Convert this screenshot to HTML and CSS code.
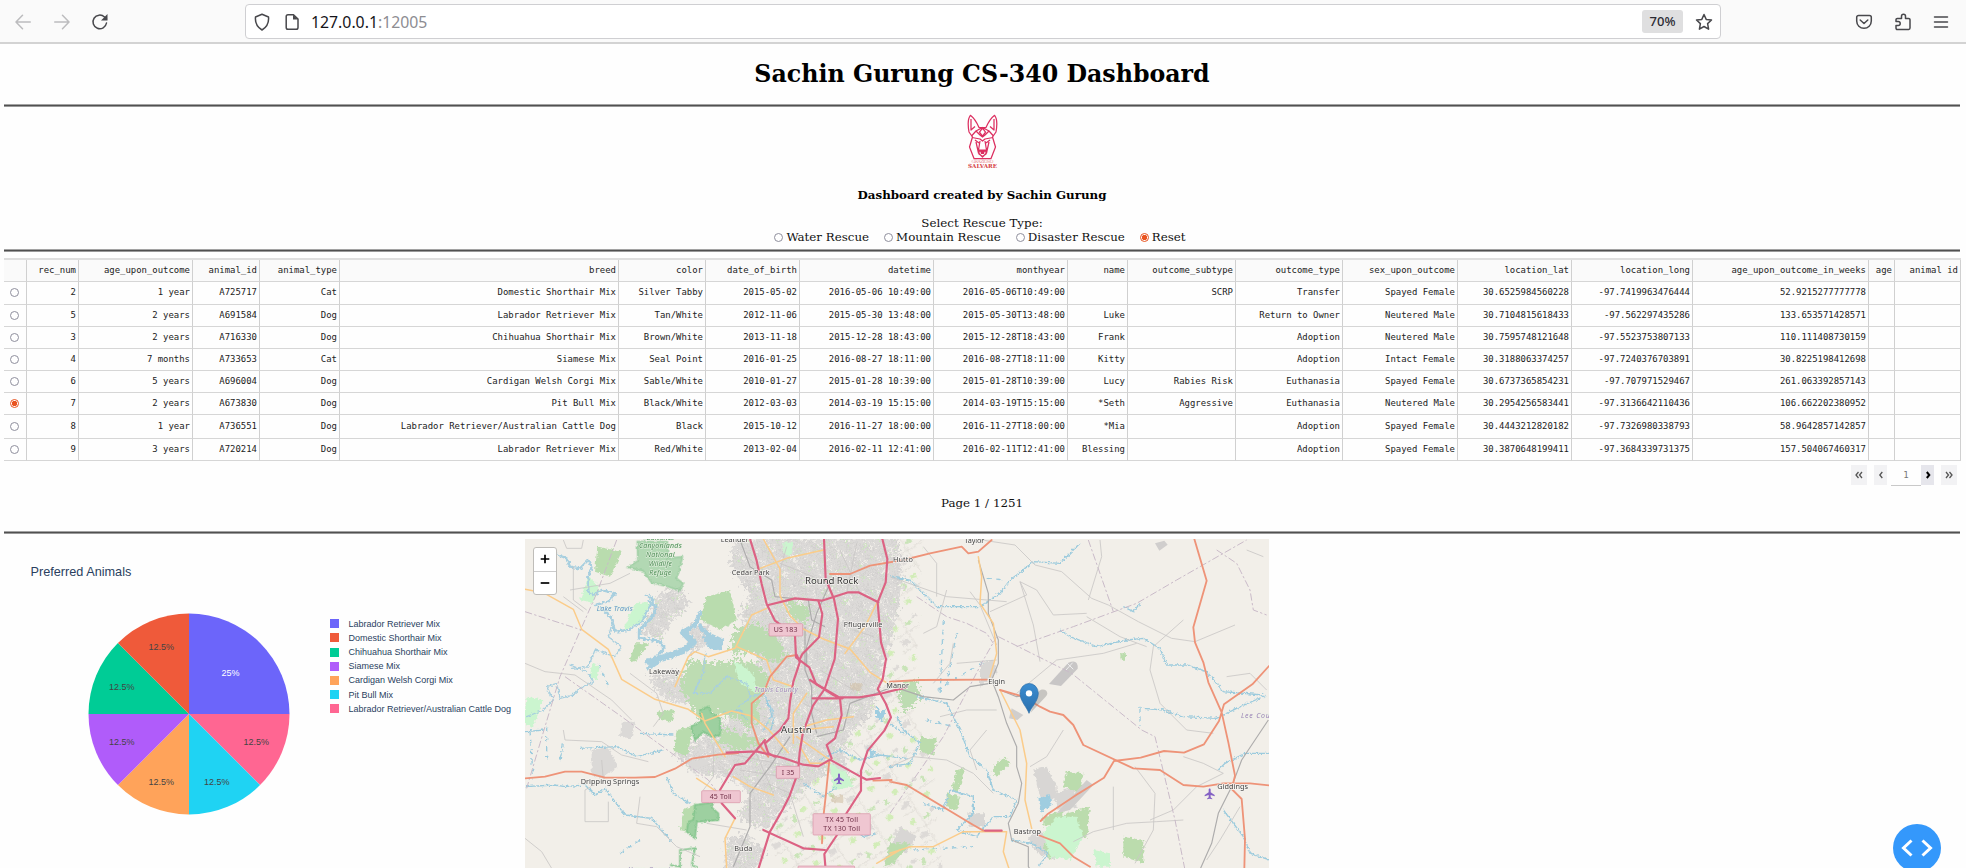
FILE: index.html
```html
<!DOCTYPE html>
<html lang="en">
<head>
<meta charset="utf-8">
<title>Sachin Gurung CS-340 Dashboard</title>
<link rel="stylesheet" href="styles.css">
</head>
<body>
<header class="toolbar">
  <div class="nav">
    <svg class="faded" width="16" height="16" viewBox="0 0 16 16"><path d="M15.3 8H1.2M7.5 1.3 1 8l6.500 6.700"/></svg>
    <svg class="faded" width="16" height="16" viewBox="0 0 16 16"><path d="M.7 8h14.100M8.500 1.300 15 8l-6.500 6.700"/></svg>
    <svg class="reload" width="18" height="18" viewBox="0 0 18 18"><path d="M15.500 10a6.800 6.800 0 1 1-2-6l2 2"/><path class="solid" d="M16.500 1v6.500H10z"/></svg>
  </div>
  <div class="urlbar">
    <svg class="shield" width="18" height="18" viewBox="0 0 18 18"><path d="M9 1.200 15.500 4c.6 6-1.500 10-6.500 13C4 14 1.900 10 2.500 4z"/></svg>
    <svg class="doc" width="16" height="18" viewBox="0 0 16 18"><path d="M4 1.700h5.500L14 6v8.500a1.800 1.800 0 0 1-1.800 1.800H4a1.800 1.800 0 0 1-1.800-1.800v-11A1.800 1.800 0 0 1 4 1.700z"/><path class="solid" d="M9 1.500V6.500h5z"/></svg>
    <div class="url">127.0.0.1<span>:12005</span></div>
    <div class="zoom">70%</div>
    <svg class="star" width="18" height="18" viewBox="0 0 18 18"><path d="m9 1.500 2.200 4.900 5.300.6-3.900 3.600 1 5.600L9 13.500l-4.600 2.700 1-5.600L1.500 7l5.300-.6z"/></svg>
  </div>
  <div class="tools">
    <svg width="18" height="18" viewBox="0 0 18 18"><path d="M3.500 2.500h11a1.800 1.800 0 0 1 1.800 1.800V8A7.200 7.200 0 0 1 1.700 8V4.300a1.800 1.800 0 0 1 1.800-1.800zM5.200 7 9 10.500 12.800 7"/></svg>
    <svg width="18" height="18" viewBox="0 0 18 18"><path d="M2.500 16.400h12.200a1.300 1.300 0 0 0 1.300-1.300V6.700a1.300 1.300 0 0 0-1.300-1.300h-3.200V3.200a2 2 0 0 0-4 0v2.200H3.300A1.300 1.300 0 0 0 2 6.700v1.800h2.200a2 2 0 0 1 0 4H2v2.700z"/></svg>
    <svg width="18" height="18" viewBox="0 0 18 18"><path d="M2.500 4h13M2.500 9h13M2.500 14h13"/></svg>
  </div>
</header>

<main class="page">
  <h1>Sachin Gurung CS-340 Dashboard</h1>
  <div class="rule"></div>
  <section class="intro">
    <svg class="logo" width="31" height="55" viewBox="0 0 31 55">
      <g fill="none" stroke="#dc2f60" stroke-width="1.250" stroke-linejoin="round">
        <path d="M2 18C.6 10 1.200 4 3.400 1.300 7 4 10 9 12 13.500h7C21 9 24 4 27.600 1.300 29.800 4 30.400 10 29 18l-3.500 5L28.500 33 24 44.500H7L2.500 33 5.500 23z"/>
        <path d="M4 5v11l4-3.500M27 5v11l-4-3.500M9 17l6.500-3.500L22 17M4.500 22 9 17l4 4 2.500 2 2.500-2 4-4 4.500 5M15.500 14l-3 4 3 4 3-4z"/>
        <path d="M5 23.500l8 1.500 2.500 2 2.500-2 8-1.500M8 26l4 3M23 26l-4 3M9 28l2.500 11 4 4 4-4L22 28M13 27l-1.500 9h8L18 27M12 37h7v3l-3.500 2.500L12 40z"/>
      </g>
      <path d="M13 36h5l-1 4h-3z" fill="#dc2f60"/>
      <text x="4.500" y="49" textLength="22" class="logo-small">GRAZIOSO</text>
      <text x="1" y="54.300" textLength="29" class="logo-big">SALVARE</text>
    </svg>
    <h5>Dashboard created by Sachin Gurung</h5>
    <div class="prompt">Select Rescue Type:</div>
    <div class="options">
      <label><i class="radio"></i>Water Rescue</label>
      <label><i class="radio"></i>Mountain Rescue</label>
      <label><i class="radio"></i>Disaster Rescue</label>
      <label><i class="radio on"></i>Reset</label>
    </div>
  </section>
  <div class="rule"></div>

  <table class="grid">
    <colgroup><col class="c0"><col class="c1"><col class="c2"><col class="c3"><col class="c4"><col class="c5"><col class="c6"><col class="c7"><col class="c8"><col class="c9"><col class="c10"><col class="c11"><col class="c12"><col class="c13"><col class="c14"><col class="c15"><col class="c16"><col class="c17"><col class="c18"></colgroup>
    <thead><tr><th></th><th>rec_num</th><th>age_upon_outcome</th><th>animal_id</th><th>animal_type</th><th>breed</th><th>color</th><th>date_of_birth</th><th>datetime</th><th>monthyear</th><th>name</th><th>outcome_subtype</th><th>outcome_type</th><th>sex_upon_outcome</th><th>location_lat</th><th>location_long</th><th>age_upon_outcome_in_weeks</th><th>age</th><th>animal id</th></tr></thead>
    <tbody>
      <tr><td><i class="radio"></i></td><td>2</td><td>1 year</td><td>A725717</td><td>Cat</td><td>Domestic Shorthair Mix</td><td>Silver Tabby</td><td>2015-05-02</td><td>2016-05-06 10:49:00</td><td>2016-05-06T10:49:00</td><td></td><td>SCRP</td><td>Transfer</td><td>Spayed Female</td><td>30.6525984560228</td><td>-97.7419963476444</td><td>52.9215277777778</td><td></td><td></td></tr>
      <tr><td><i class="radio"></i></td><td>5</td><td>2 years</td><td>A691584</td><td>Dog</td><td>Labrador Retriever Mix</td><td>Tan/White</td><td>2012-11-06</td><td>2015-05-30 13:48:00</td><td>2015-05-30T13:48:00</td><td>Luke</td><td></td><td>Return to Owner</td><td>Neutered Male</td><td>30.7104815618433</td><td>-97.562297435286</td><td>133.653571428571</td><td></td><td></td></tr>
      <tr><td><i class="radio"></i></td><td>3</td><td>2 years</td><td>A716330</td><td>Dog</td><td>Chihuahua Shorthair Mix</td><td>Brown/White</td><td>2013-11-18</td><td>2015-12-28 18:43:00</td><td>2015-12-28T18:43:00</td><td>Frank</td><td></td><td>Adoption</td><td>Neutered Male</td><td>30.7595748121648</td><td>-97.5523753807133</td><td>110.111408730159</td><td></td><td></td></tr>
      <tr class="short"><td><i class="radio"></i></td><td>4</td><td>7 months</td><td>A733653</td><td>Cat</td><td>Siamese Mix</td><td>Seal Point</td><td>2016-01-25</td><td>2016-08-27 18:11:00</td><td>2016-08-27T18:11:00</td><td>Kitty</td><td></td><td>Adoption</td><td>Intact Female</td><td>30.3188063374257</td><td>-97.7240376703891</td><td>30.8225198412698</td><td></td><td></td></tr>
      <tr><td><i class="radio"></i></td><td>6</td><td>5 years</td><td>A696004</td><td>Dog</td><td>Cardigan Welsh Corgi Mix</td><td>Sable/White</td><td>2010-01-27</td><td>2015-01-28 10:39:00</td><td>2015-01-28T10:39:00</td><td>Lucy</td><td>Rabies Risk</td><td>Euthanasia</td><td>Spayed Female</td><td>30.6737365854231</td><td>-97.707971529467</td><td>261.063392857143</td><td></td><td></td></tr>
      <tr><td><i class="radio on"></i></td><td>7</td><td>2 years</td><td>A673830</td><td>Dog</td><td>Pit Bull Mix</td><td>Black/White</td><td>2012-03-03</td><td>2014-03-19 15:15:00</td><td>2014-03-19T15:15:00</td><td>*Seth</td><td>Aggressive</td><td>Euthanasia</td><td>Neutered Male</td><td>30.2954256583441</td><td>-97.3136642110436</td><td>106.662202380952</td><td></td><td></td></tr>
      <tr class="tall"><td><i class="radio"></i></td><td>8</td><td>1 year</td><td>A736551</td><td>Dog</td><td>Labrador Retriever/Australian Cattle Dog</td><td>Black</td><td>2015-10-12</td><td>2016-11-27 18:00:00</td><td>2016-11-27T18:00:00</td><td>*Mia</td><td></td><td>Adoption</td><td>Spayed Female</td><td>30.4443212820182</td><td>-97.7326980338793</td><td>58.9642857142857</td><td></td><td></td></tr>
      <tr class="short"><td><i class="radio"></i></td><td>9</td><td>3 years</td><td>A720214</td><td>Dog</td><td>Labrador Retriever Mix</td><td>Red/White</td><td>2013-02-04</td><td>2016-02-11 12:41:00</td><td>2016-02-11T12:41:00</td><td>Blessing</td><td></td><td>Adoption</td><td>Spayed Female</td><td>30.3870648199411</td><td>-97.3684339731375</td><td>157.504067460317</td><td></td><td></td></tr>
    </tbody>
  </table>
  <div class="pager">
    <span class="btn first"><svg width="8" height="8" viewBox="0 0 8 8"><path d="M3.500 1 1 4l2.500 3M7 1 4.500 4 7 7"/></svg></span>
    <span class="btn prev"><svg width="8" height="8" viewBox="0 0 8 8"><path d="M5.300 1 2.800 4l2.500 3"/></svg></span>
    <span class="current">1</span>
    <span class="btn next"><svg width="8" height="8" viewBox="0 0 8 8"><path d="M2.800 1 5.300 4 2.800 7"/></svg></span>
    <span class="btn last"><svg width="8" height="8" viewBox="0 0 8 8"><path d="M1 1l2.500 3L1 7M4.500 1 7 4 4.500 7"/></svg></span>
  </div>
  <div class="page-count">Page 1 / 1251</div>
  <div class="rule"></div>

  <section class="charts">
    <div class="pie-card">
      <h2>Preferred Animals</h2>
      <div class="pie-row">
        <svg class="pie" width="202" height="202" viewBox="-101 -101 202 202">
          <path fill="#6c65fa" d="M0 0V-100.500A100.500 100.500 0 0 1 100.500 0z"/>
          <path fill="#ff6692" d="M0 0H100.500A100.500 100.500 0 0 1 71.060 71.060z"/>
          <path fill="#1fd3f3" d="M0 0 71.060 71.060A100.500 100.500 0 0 1 0 100.500z"/>
          <path fill="#ffa35a" d="M0 0V100.500A100.500 100.500 0 0 1-71.060 71.060z"/>
          <path fill="#b05cfa" d="M0 0-71.060 71.060A100.500 100.500 0 0 1-100.500 0z"/>
          <path fill="#00cc96" d="M0 0H-100.500A100.500 100.500 0 0 1-71.060-71.060z"/>
          <path fill="#ef5a3a" d="M0 0-71.060-71.060A100.500 100.500 0 0 1 0-100.500z"/>
          <g class="slice">
            <text class="light" x="41.500" y="-38">25%</text>
            <text x="-27.700" y="-64">12.5%</text><text x="-67.300" y="-24.300">12.5%</text>
            <text x="-67.300" y="31.200">12.5%</text><text x="-27.700" y="71">12.5%</text>
            <text x="27.700" y="71">12.5%</text><text x="67.300" y="31.200">12.5%</text>
          </g>
        </svg>
        <ul class="legend">
          <li><i class="k1"></i>Labrador Retriever Mix</li>
          <li><i class="k2"></i>Domestic Shorthair Mix</li>
          <li><i class="k3"></i>Chihuahua Shorthair Mix</li>
          <li><i class="k4"></i>Siamese Mix</li>
          <li><i class="k5"></i>Cardigan Welsh Corgi Mix</li>
          <li><i class="k6"></i>Pit Bull Mix</li>
          <li><i class="k7"></i>Labrador Retriever/Australian Cattle Dog</li>
        </ul>
      </div>
    </div>
    <div class="map">
      <svg width="744" height="329" viewBox="15 27 2232 987">
        <defs>
          <filter id="wiggle" x="-5%" y="-5%" width="110%" height="110%"><feTurbulence type="fractalNoise" baseFrequency=".12" numOctaves="2" seed="4"/><feDisplacementMap in="SourceGraphic" scale="9" xChannelSelector="R" yChannelSelector="G"/></filter>
          <filter id="stream" x="-5%" y="-5%" width="110%" height="110%"><feTurbulence type="fractalNoise" baseFrequency=".13" numOctaves="2" seed="7"/><feDisplacementMap in="SourceGraphic" scale="13" xChannelSelector="R" yChannelSelector="G"/></filter>
          <filter id="rough" x="-5%" y="-5%" width="110%" height="110%"><feTurbulence type="fractalNoise" baseFrequency=".1" numOctaves="3" seed="9"/><feDisplacementMap in="SourceGraphic" scale="16" xChannelSelector="R" yChannelSelector="G"/></filter>
          <filter id="patchy" x="-5%" y="-5%" width="110%" height="110%"><feTurbulence type="fractalNoise" baseFrequency=".1" numOctaves="3" seed="9"/><feDisplacementMap in="SourceGraphic" scale="55" xChannelSelector="R" yChannelSelector="G"/></filter>
          <pattern id="streets" width="68" height="60" patternUnits="userSpaceOnUse" patternTransform="rotate(22)"><rect width="68" height="60" fill="#dcdad8"/><path d="M0 8h34M10 0v30M0 22h50M24 8v42M34 40h34M48 20v40M60 0v25M0 46h14" stroke="#cbc9c8" stroke-width="2" fill="none"/><path d="M28 12h8v8h-8zM52 44h8v6h-8z" fill="#cbe9bb"/><path d="M2 26h8v10H2zM36 0h14v12H36zM14 50h10v8H14z" fill="#efece7"/></pattern>
          <pattern id="fields" width="130" height="104" patternUnits="userSpaceOnUse" patternTransform="rotate(-32)"><path d="M8 8h18v14H8zM84 64h20v14H84z" fill="#d2edb8"/><path d="M50 16h22v10H50zM104 18h12v18h-12z" fill="#c9e4b8"/><path d="M10 58h26v18H10zM78 8h16v10H78z" fill="#dddad7"/><path d="M0 44h130M44 0v104M0 90h44" stroke="#d6d2ce" stroke-width="2"/></pattern>
          <linearGradient id="pin" x2="0" y2="1"><stop offset="0" stop-color="#3b8cd0"/><stop offset="1" stop-color="#2a70ad"/></linearGradient>
        </defs>
        <rect x="0" y="0" width="2300" height="1100" fill="#f2efe9"/>

        <!-- built-up land -->
        <g filter="url(#rough)">
          <path fill="url(#fields)" d="M1010 20h200l-10 250-20 250 60 200 30 320H730l40-240 190-130z"/>
        </g>
        <g filter="url(#patchy)">
          <path fill="url(#streets)" d="M640 20h490l20 130-30 150-40 150-30 110-60 50-20 60 20 70-60-20-80 60-60 60-50 60-90-40 40-60-40-50-130-20-60-60 80-40 60-50 90-60 30-110-60-150 30-70-60-80z"/>
          <path fill="url(#streets)" d="M620 930l60-20 60 60-40 50h-80zM560 590l140 0 20 80-130 10zM380 440l90-20 40 60 60 20-20 30-120-20zM420 190l60-20 30 50-60 60-30 50-60-20zM500 290l60-10 10 60-60 30z"/>
        </g>
        <g filter="url(#rough)">
          <path fill="#dbd9d7" d="M215 660l50-10 30 60-50 35-30-10zM305 575l40 0-10 50-35-5zM500 700l60-15 10 20-60 10z"/>
          <path fill="#d8d6d4" d="M1540 720l40-10 30 60 0 40-50-10zM1610 790l50-20 10 60-60 10zM1545 900l60 30 0 60-50-20-30-40zM1345 850l50 0 0 40-50 0zM1140 890l50 30-30 50-50-10zM1380 400l40-10 10 40-50 40z"/>
        </g>
        <!-- parks and woods -->
        <g filter="url(#rough)">
          <path fill="#b9dcae" d="M232 50l73 15-35 75-45-15zM345 340l40 0-40 60-15-10zM410 545l50-5 0 35-40-5zM470 600l50-10-20 90-40-20zM490 840l40-20-10 90-40-10zM560 200l70-20 20 90-50 30-60-30z"/>
        </g>
        <g filter="url(#patchy)" fill="#bddcb2">
          <path d="M640 300l70-20 60 40 30 50-30 30-60-30-80 0zM480 470l30-80 60 10 80-10 60 10 40 50-30 60-60 60-60-20-70 10zM650 530l60-20 10 60-40 30zM610 590l120 50-70 25-70-30zM800 210l70 20-10 50-50-20zM1130 470l60-20 10 60-50 40zM710 300l50 10 10 60-50-20z"/>
        </g>
        <g filter="url(#rough)">
          <path fill="#bbdcad" d="M1640 725l50 5-10 60-50-20zM1450 680l20 20-40 40-15-20zM1310 720l25-5-20 75-20-10zM1200 620l50 5-10 50-40-10zM1640 850l70-20-10 90-80 10-30 60-20-40zM1810 920l60 10 0 70-60-20zM1110 940l60 0-50 60-30 10zM1280 790l40 10-10 40-30-10zM1570 860l60-20 0 30-60 20zM1800 370l18 0 0 22-15 0z"/>
          <path fill="#cbf5cf" d="M345 220l50-5-25 60-60 25zM205 140l35 30-20 50-40-10zM20 500l50 10-30 80-30-10zM1570 910l40-50 60 0 20 60-40 70-60-10zM640 390l60 40 10 60-50-30zM790 35l30 5-10 40-20-10zM930 700l50 30 20 40-60 10zM215 400l25 10-10 40-20-10zM1720 960l50 10 0 40-40 0z"/>
          <path fill="#cdb99b" opacity=".5" d="M990 460l35 0 0 25-30-5zM930 800l40-5 0 25-35-5z"/>
        </g>
        <g fill="#9dd0a0" stroke="#83c58c" stroke-width="5" filter="url(#wiggle)">
          <path d="M352 35l90 0 0 50 45-5-10 45-8 20 20 15-10 22-45-15-40-10-25-35-45-10 30-20z" opacity=".75"/>
          <path d="M540 540l25-10 10 20 25 15 0 50-25 5-25-15-25 25-12-40 30-15z"/><path d="M525 825l55-8-5 15 20 18 0 20-65 5-5 50-25-20 5-30 15-5z"/>
          <path fill="none" d="M450 1005l30 5 0-50 45-5-10 50 20 8"/>
        </g>
        <path fill="#c8c6c6" d="M1645 398q30-12 28 18l-50 52-36-6z"/><path d="M1640 398l20 20M1658 398l-20 22" stroke="#eee" stroke-width="3"/>
        <path fill="#d0cecd" d="M1700 750l20 15-70 75-40 10zM1475 535l35 20-18 15-25-5zM1905 40l28-8 10 12-25 18z"/>

        <!-- water -->
        <g fill="none" stroke="#a8cfdf" stroke-linejoin="round" stroke-linecap="round" filter="url(#stream)">
          <path stroke-width="7" d="M115 75l25 10 10 25 30 5 25-25 10 20-10 30 0 45 15 10 25-15 40 10-20 25-40 10M245 235l30 30 10 40 40-5 40-25 35-65-20-15"/>
          <path stroke-width="9" d="M388 215l20 15-10 30-40 40 0 25 60 8 15 20-30 35"/>
          <path stroke-width="20" d="M385 395l55-15 50-18 30-25-30-30"/>
          <path stroke-width="13" d="M490 305l35-20 15-35M540 290l30 30M415 395l-30 20"/>
          <path fill="#a8cfdf" stroke-width="5" d="M565 310l25 10 20 10-10 28-30-5-20-30z"/>
          <path stroke-width="4" d="M555 370l-5 60-30 60 50 0 50-50 60 20 10 40 40-10 30 60-30 50M695 500l-40 30"/>
          <path stroke-width="4" d="M280 270l-15 50 40 30-20 30-60-20-20 50-50 5M150 405l50 20 20 30-40 20-20 20-40 10-10-45-30 10 20 40-30 30-50 20"/>
        </g>
        <g fill="none" stroke="#9ccbdd" stroke-width="4" filter="url(#stream)">
          <path d="M15 770l90-5 30 5 60-5 30 30 30-20 60 80 80 10 60 70M180 655l110-5 60 30 80-20M360 610l100 5M440 740l20 50 50 30M15 605l60-5M130 640l-10 50"/>
          <path d="M900 690l60-30 60 30 60-15 80 10M850 760l60 40 40-30M610 550l50-10 20 30M740 510l20 60-10 40M980 880l50 40 40-10"/>
          <path d="M1110 140l60 10 80 80 130 0 60-40 30-40 20-15 50-40 80 5 60-60"/>
          <path d="M1620 300l30 20 80 30 90-20 50-5 50 30 20 50 60 0 60 20 50 60 120 10"/>
          <path d="M1870 535l60 5 60 20 100 5 60-30 90-40"/><path d="M1190 500l90 20 40 80 30 80 50 40 20 60 70 30-20 50-50 0-50 60-60-20 50-50 0-50-70-20-20 60-60-20M1110 710l60-10 30-60-50-40-20-40M1110 580l40 30"/>
          <path d="M2095 720l20-20 60-30 80 0M2110 840l60 80 20 50 60 20M1475 930l60 10 50 30-30 40M1810 230l30 15 20-25"/>
          <path stroke-dasharray="16 13" d="M1270 270l-10 230M1310 310l-30 150M235 400l35 80M30 600l10 150M80 590l0 110M360 930l-60 40M1400 145l55 5M1180 960l180-10M1860 530l0 60M1250 480l150-90M1220 570l80 20"/>
        </g>
        <path filter="url(#rough)" fill="#9fcde0" d="M1068 520l10 25 20-10-10 40-20-15zM1555 805l35-10 5 30-30 20zM1040 650l25 15-10 15z"/>

        <!-- minor roads, rail and boundaries -->
        <g fill="none" stroke="#c9c6c5" stroke-width="2.500" stroke-linejoin="round">
          <path d="M15 400l60 25 90 10 110 75 60 60M130 600l5 30 110 5 60 40 80 20M245 690l5 60-55 30 0 95 70 0 0-60M360 800l-10 80 60 10 60 60 70 30M15 925l50 40 30 50M130 200l60 45M330 130l-60 30-120 20M330 430l80 60 20 60-30 40M580 650l0 90-30 40M130 30l10 25 45 0 5-25M160 110l0 100 40 30"/>
          <path d="M1210 50l40 50 0 100M1500 155l50 25 50 75 100-5M1350 185l30 40 50 120M1500 155l40 130 20 110M1110 140l170 60 180 15M1210 310l40-20 30-110M1490 490l120-100 140-20 100-30M1410 245l110-50-20-40"/>
          <path d="M1385 30l100 15 60 60 80 20 90 80 50 20 90 50 100 50 70 10 120-50M1990 270l-90 80-10 70 30 100 80 80 80 10M2180 60l50 20M1740 30l5 50-40 130M1845 710l60 80-5 110-55 100M1990 870l-80 5-90 5-100 25-60 30M1990 680l60 20 60 30-80 40-70 70-70 30M1700 260l100 60 80 30M2120 440l70-10 50 50M2160 830l-60 100-40 60"/>
          <path d="M1110 710l70-30 100 10 80 40 60 60M1260 560l80-20 90 0M1310 400l120-10M1530 710l50-30 50-80M1780 770l0 130M1300 340l-10 60-50 60M1400 600l-50 60 20 60"/>
          <path d="M620 670l200 40M660 720l190 30M700 650l60 140M560 880l120 20M740 760l70 30 40 130M1000 300l60 20M900 420l100 60M850 520l60 30M1000 660l60 60M780 100l100 40M680 80l60 50M800 50l-20 70M960 60l60 130M1010 40l-30 150"/>
        </g>
        <g fill="none" stroke="#adacac" stroke-width="3.500" stroke-linejoin="round">
          <path d="M930 160l-40 90-30 100 0 60M855 290l0 130 20 50 0 80 15 60M660 30l30 80 65 40 10 50 100 10 10 60 40 20M810 620l-60 90-60 80 0 100-50 120M890 620l80-20 20-80 130-50 90 30 90 10 50-40 60-10"/>
          <path d="M1375 90l30 100 0 60 30 80 0 70-20 50 20 50 25 80 30 70 0 60 15 50-10 60-30 60 10 50 50 20 0 60 40 60M2245 570l-80 120-30 80-40 80-20 90-40 90M1440 480l50 20 60-10"/>
        </g>
        <g fill="none" stroke="#c9bac8" stroke-width="3" stroke-dasharray="22 7 7 7">
          <path d="M290 30l-60 160-110 250-60 200-40 135M15 245l170 55M135 440l170 120 260 190 30 40M1435 320l220 110 210 170 40 20 60 250 30 150M1490 350l170-60 190-70 120-70 210-120M1705 30l75 215M1110 850l160-230 120-230 40-70M2090 60l60 40 40 80 10 60 40 15M1190 200l90 60 60 20 60 30 20 30"/>
        </g>

        <!-- highways -->
        <g fill="none" stroke-linejoin="round" stroke-linecap="round">
          <g stroke="#fbcc8a" stroke-width="4.500">
            <path d="M15 178l55 10 90 50 25 60 80 60 40 90 100 60 100 30 50 35 80-30 60 15 50 40 60 70M730 27l50 90 0 80 30 60 40 40 60 30 80 30 60 70 80 50M720 115l80-30 110-25M465 470l40-90 20-15 40 15 80-25 50-100 45-20M650 350l90 40 20 60 60 20M615 680l-60-100-10-30"/>
            <path d="M860 490l-40 60 0 90M940 590l-100 10M830 620l100 70M975 370l60-80 40-80M1000 560l-80 10-70 20-10 60 30 50 60 0M645 865l-30 60 5 90M530 745l60 40M640 740l50 30 70 25M1140 960l-70 40"/>
            <path d="M1375 80l10 60-5 80 40 60 10 90-20 70M1440 480l60 120 20 100-5 110 20 85M1110 970l60-20 70 0 90-45 130 0-10 60 20 60"/>
          </g>
          <g stroke="#ee9378" stroke-width="5.500">
            <path d="M15 745l60-5 60-15 50 0 70 18 90 0 60-2 60-25 50-30 80-12 60-5M930 132l60 0 60-25 100-17 80-20 95-20 20 20 30-5 40-35M1110 455l90-5 200-1M1440 480l70 20 50 30 30 15 40 10 30 30 30 60 150 70 80 5 70 45 60 5 60-10 80 0 190 20"/>
            <path d="M2023 27l37 125-40 140 5 45 25 60 15 60 40 90 20 90 20 100-10 40 30 30 10 120-2 90M2247 408l-50 55-85 60-15 50-45 70-60 25-60-5-70 20-80 10-30 50-80 50-90 60-20 20M1110 755l50 10 200 120 30 17M1555 915l65 25 40 40 50 30M1060 752l55-2M928 690l-10 100-10 90-2 60"/>
            <path d="M830 375l-30 5-50 60-20 50-35 30 0 60 20 60 30 40"/>
          </g>
          <g stroke="#dc6283" stroke-width="6.500">
            <path d="M912 27l5 120 25 60 12 60-5 60-5 60-30 90-35 50-30 80-10 60-5 60-25 70-20 40-40 70-40 130-25 80"/>
            <path d="M690 27l20 65 15 70 15 60 25 50 60 45 3 65 40 30 20 50 70 40 60 0 60-10 80-20M745 225l80-20 80 7 80-25 30 0 60 30M1087 27l15 60-5 70-24 60 5 60 5 60 15 50-10 60-15 30 25 45 15 40-20 40-50 60-20 60 0 60-45 70-25 60-40 60 5 60"/>
            <path d="M620 668l90-4 80 20 60 20 45 5 35-20 90 50 20 10 40-5M735 630l-60 70-30 5-45 75M605 820l40 45M730 900l120 55 65 5M1395 902h50M830 375l10 20-20 60-10 60-5 50-25 35-45 40 10 30 20 10M895 212l12 40-10 70-20 20-30 30-10 20M878 505l90 0M870 450l70 45 20 10 5 50-20 70-25 20 15 40"/>
          </g>
        </g>

        <!-- route shields -->
        <g class="shields">
          <rect x="747" y="281" width="101" height="37"/><rect x="769" y="709" width="70" height="36"/><rect x="545" y="782" width="116" height="36"/><rect x="879" y="851" width="172" height="64"/><rect x="834" y="1008" width="170" height="40"/>
          <text x="797" y="306" textLength="71">US 183</text><text x="804" y="734" textLength="38">I 35</text><text x="602" y="808" textLength="66">45 Toll</text><text x="965" y="877" textLength="98">TX 45 Toll</text><text x="965" y="903" textLength="110">TX 130 Toll</text>
        </g>
        <g class="places">
          <text class="city" x="935" y="162" textLength="160">Round Rock</text><text class="city" x="829" y="610" textLength="92">Austin</text>
          <text x="644" y="35" textLength="84">Leander</text><text x="692" y="135" textLength="114">Cedar Park</text><text x="1029" y="291" textLength="116">Pflugerville</text><text x="432" y="433" textLength="90">Lakeway</text><text x="270" y="762" textLength="176">Dripping Springs</text><text x="670" y="964" textLength="54">Buda</text><text x="1149" y="95" textLength="60">Hutto</text><text x="1363" y="38" textLength="60">Taylor</text><text x="1133" y="474" textLength="68">Manor</text><text x="1430" y="461" textLength="50">Elgin</text><text x="1522" y="912" textLength="82">Bastrop</text><text x="2138" y="776" textLength="92">Giddings</text>
        </g>
        <g class="nature">
          <text x="421" y="30">Balcones</text><text x="421" y="54" textLength="128">Canyonlands</text><text x="421" y="81" textLength="86">National</text><text x="421" y="108" textLength="70">Wildlife</text><text x="421" y="135" textLength="66">Refuge</text>
          <text class="lake" x="284" y="242" textLength="108">Lake Travis</text><text class="county" x="768" y="487" textLength="130">Travis County</text><text class="county" x="2224" y="564" textLength="122">Lee County</text><text class="county" x="393" y="1026" textLength="140">Hays County</text>
        </g>
        <g fill="#8461c4"><path id="plane" d="M954 734c0-5 6-5 6 0v8l12 8v4l-12-4v7l5 4v2l-8-2-8 2v-2l5-4v-7l-12 4v-4l12-8z"/><use href="#plane" x="1112" y="45"/></g>

        <!-- marker -->
        <path d="M1532 548l45-48c15-16-8-30-22-15z" fill="#777" opacity=".35"/>
        <path d="M1527 550c-6-18-27-37-27-60a27 29 0 0 1 55 0c0 23-22 42-28 60z" fill="url(#pin)" stroke="#2b6da7" stroke-width="2"/><circle cx="1527" cy="490" r="9.500" fill="#fff"/>
      </svg>
      <div class="map-zoom"><span><svg width="10" height="10" viewBox="0 0 10 10"><path d="M5 .7v8.600M.7 5h8.600"/></svg></span><span><svg width="10" height="10" viewBox="0 0 10 10"><path d="M.7 5h8.600"/></svg></span></div>
    </div>
  </section>
</main>
<div class="devtools"><svg width="32" height="18" viewBox="0 0 32 18"><path d="M10.500 1.500 2.500 9l8 7.500M21.500 1.500l8 7.500-8 7.500"/></svg></div>
</body>
</html>
```
FILE: styles.css
```css
* { box-sizing: border-box; }
body { margin: 0; width: 1966px; height: 868px; overflow: hidden; position: relative; background: #fefefe; color: #111; font: 12px/14px "DejaVu Serif", serif; }
svg { display: block; flex: none; }

/* browser toolbar */
.toolbar { height: 44px; display: flex; align-items: center; background: #fafafa; border-bottom: 2px solid #d3d3d3; padding: 1px 16px 0 15px; }
.toolbar svg { fill: none; stroke: #48484c; stroke-width: 1.5; stroke-linecap: round; stroke-linejoin: round; }
.toolbar .solid { fill: #48484c; stroke: none; }
.toolbar .faded { stroke: #bcbcbe; }
.nav { display: flex; align-items: center; gap: 23px; width: 230px; }
.nav .reload { margin-left: -2px; }
.urlbar { width: 1476px; height: 35px; display: flex; align-items: center; background: #fff; border: 1.500px solid #cfcfd2; border-radius: 4px; padding: 0 7px; }
.shield { margin-right: 13px; }
.url { flex: 1; margin-left: 11px; font: 15.800px/20px "Noto Sans", sans-serif; color: #15141a; }
.url span { color: #8d8d92; }
.zoom { width: 41px; height: 23px; margin-right: 12px; border-radius: 3px; background: #dfdfe0; text-align: center; font: 500 13px/23px "Noto Sans", sans-serif; color: #2b2a33; }
.tools { margin-left: auto; display: flex; gap: 20.500px; }

/* page heading */
.page { padding: 0 6px 0 4px; }
h1 { margin: 0; height: 60px; padding-top: 15px; text-align: center; font-size: 23.700px; line-height: 30px; color: #000; }
.rule { height: 3px; background: #505050; border-top: 1px solid #a3a3a3; border-bottom: 1px solid #999; }
.intro { height: 142px; padding-top: 7px; display: flex; flex-direction: column; align-items: center; }
.logo-small { font: 4.500px "DejaVu Serif", serif; fill: #e98a8f; }
.logo-big { font: bold 5.600px "DejaVu Serif", serif; fill: #d6403f; }
h5 { margin: 19px 0 0; font-size: 11.850px; line-height: 14px; color: #000; }
.prompt { margin-top: 14px; font-size: 11.850px; }
.options { display: flex; gap: 15px; margin: 0 4px 0 0; font-size: 11.850px; }
.options label { display: flex; align-items: center; gap: 3px; }
.radio { display: block; width: 9px; height: 9px; border: 1px solid #8f8f9d; border-radius: 50%; background: #fff; }
.radio.on { border-color: #e95420; background: radial-gradient(circle, #e95420 0 2.400px, #fff 3px); }

/* data table */
.grid { margin-top: 6px; width: 1957px; table-layout: fixed; border-collapse: separate; border-spacing: 0; border-top: 2px solid #dedede; font: 8.950px/11px "DejaVu Sans Mono", monospace; color: #222; }
.grid th, .grid td { padding: 0 2px 0 0; text-align: right; font-weight: normal; white-space: nowrap; border-right: 1px solid #d0d0d0; border-bottom: 1.500px solid #d6d6d6; }
.grid th { background: #fafafa; }
.grid tr { height: 22.300px; }
.grid .short { height: 21.700px; }
.grid .tall { height: 23.400px; }
.grid td:first-child { padding: 0 0 0 6px; }
.c0 { width: 23px; } .c1 { width: 52px; } .c2 { width: 114px; } .c3 { width: 67px; } .c4 { width: 80px; }
.c5 { width: 279px; } .c6 { width: 87px; } .c7 { width: 94px; } .c8 { width: 134px; } .c9 { width: 134px; }
.c10 { width: 60px; } .c11 { width: 108px; } .c12 { width: 107px; } .c13 { width: 115px; } .c14 { width: 114px; }
.c15 { width: 121px; } .c16 { width: 176px; } .c17 { width: 26px; } .c18 { width: 66px; }

.pager { display: flex; justify-content: flex-end; height: 21px; margin-top: 4px; padding-right: 3px; }
.btn { height: 20px; display: flex; align-items: center; justify-content: center; background: #f2f2f4; }
.btn svg { fill: none; stroke: #555; stroke-width: 1.300; }
.first, .last { width: 16px; }
.prev { width: 13px; margin: 0 4px 0 7px; }
.next { width: 13px; margin-right: 7px; background: #e6e6ec; }
.next svg { stroke: #000; stroke-width: 2; }
.current { width: 30px; height: 21px; border-bottom: 1px solid #c9c9c9; text-align: center; font: 9px/21px "DejaVu Sans Mono", monospace; color: #777; }
.page-count { height: 45px; padding-top: 10px; text-align: center; font-size: 11.850px; }

/* pie chart */
.charts { display: flex; margin-top: 5px; height: 329px; }
.pie-card { width: 521px; padding: 24px 0 0 26.500px; font-family: "Liberation Sans", Arial, sans-serif; color: #2a3f5f; }
h2 { margin: 0; font-weight: normal; font-size: 12.700px; line-height: 18px; }
.pie-row { display: flex; margin: 32px 0 0 57.500px; }
.slice { font-size: 9px; text-anchor: middle; fill: #444; }
.slice .light { fill: #fff; }
.legend { list-style: none; margin: 4px 0 0 39.500px; padding: 0; font-size: 9px; }
.legend li { display: flex; align-items: center; gap: 10px; height: 14.200px; white-space: nowrap; }
.legend i { width: 9px; height: 9px; }
.k1 { background: #6c65fa; } .k2 { background: #ef5a3a; } .k3 { background: #00cc96; } .k4 { background: #b05cfa; }
.k5 { background: #ffa35a; } .k6 { background: #1fd3f3; } .k7 { background: #ff6692; }

/* map */
.map { position: relative; width: 744px; height: 329px; overflow: hidden; }
.map text { font-family: "Noto Sans", sans-serif; text-anchor: middle; }
.places text { font-size: 22px; fill: #444; stroke: #f6f4f1; stroke-width: 4px; paint-order: stroke; }
.places .city { font-size: 29px; fill: #333; }
.nature text { font-size: 21px; font-style: italic; fill: #478a50; stroke: #e9f2e4; stroke-width: 3px; paint-order: stroke; }
.nature .lake { fill: #5f94c8; }
.nature .county { fill: #a283ba; }
.shields rect { fill: #efc6d1; stroke: #d891a6; stroke-width: 2; rx: 3px; }
.shields text { font-size: 21px; fill: #713048; }
.map-zoom { position: absolute; left: 8px; top: 8px; width: 24px; height: 48px; border: 1px solid #bfbdb9; border-radius: 3px; background: #fff; }
.map-zoom span { display: flex; align-items: center; justify-content: center; height: 23px; }
.map-zoom span + span { border-top: 1px solid #ccc; }
.map-zoom path { stroke: #000; stroke-width: 1.700; }

.devtools { position: absolute; left: 1893px; top: 824px; width: 48px; height: 48px; border-radius: 50%; background: #3498fb; display: flex; align-items: center; justify-content: center; }
.devtools path { fill: none; stroke: #fff; stroke-width: 3; }
```
